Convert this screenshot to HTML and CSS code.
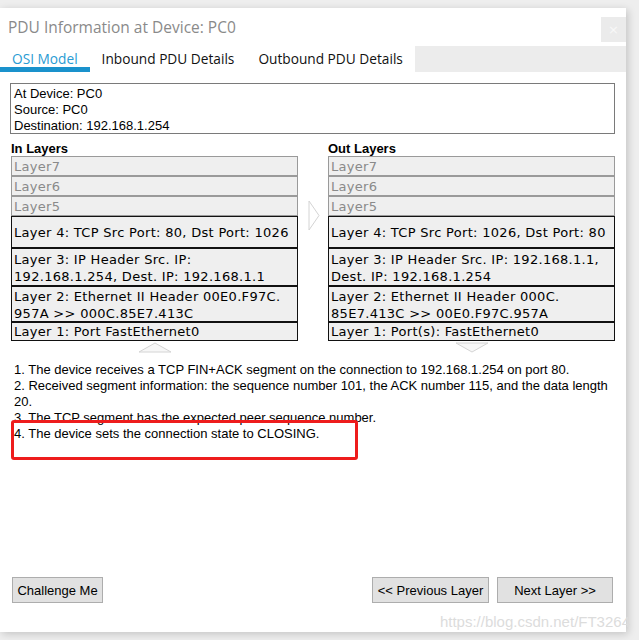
FILE: index.html
```html
<!DOCTYPE html>
<html>
<head>
<meta charset="utf-8">
<link rel="stylesheet" href="styles.css">
</head>
<body>
<div class="window">
  <div class="titlebar">
    <div class="title">PDU Information at Device: PC0</div>
    <div class="close">×</div>
  </div>
  <div class="tabs">
    <div class="tab active">OSI Model</div>
    <div class="tab">Inbound PDU Details</div>
    <div class="tab">Outbound PDU Details</div>
    <div class="tab-fill"></div>
  </div>
  <div class="info">
    <div>At Device: PC0</div>
    <div>Source: PC0</div>
    <div>Destination: 192.168.1.254</div>
  </div>
  <div class="columns">
    <div class="col">
      <div class="col-head">In Layers</div>
      <div class="layer off">Layer7</div>
      <div class="layer off">Layer6</div>
      <div class="layer off">Layer5</div>
      <div class="layer on l4">Layer 4: TCP Src Port: 80, Dst Port: 1026</div>
      <div class="layer on l3">Layer 3: IP Header Src. IP:<br>192.168.1.254, Dest. IP: 192.168.1.1</div>
      <div class="layer on l2">Layer 2: Ethernet II Header 00E0.F97C.<br>957A &gt;&gt; 000C.85E7.413C</div>
      <div class="layer on l1">Layer 1: Port FastEthernet0</div>
      <div class="under">
        <svg width="34" height="11" viewBox="0 0 34 11"><polygon points="1,10 17,1 33,10" fill="#f7f7f7" stroke="#d4d4d4" stroke-width="1"/></svg>
      </div>
    </div>
    <div class="mid">
      <svg width="12" height="31" viewBox="0 0 12 31"><polygon points="1,1 11,15.5 1,30" fill="#ffffff" stroke="#d4d4d4" stroke-width="1"/></svg>
    </div>
    <div class="col">
      <div class="col-head">Out Layers</div>
      <div class="layer off">Layer7</div>
      <div class="layer off">Layer6</div>
      <div class="layer off">Layer5</div>
      <div class="layer on l4">Layer 4: TCP Src Port: 1026, Dst Port: 80</div>
      <div class="layer on l3">Layer 3: IP Header Src. IP: 192.168.1.1,<br>Dest. IP: 192.168.1.254</div>
      <div class="layer on l2">Layer 2: Ethernet II Header 000C.<br>85E7.413C &gt;&gt; 00E0.F97C.957A</div>
      <div class="layer on l1">Layer 1: Port(s): FastEthernet0</div>
      <div class="under">
        <svg width="34" height="11" viewBox="0 0 34 11"><polygon points="1,1 17,10 33,1" fill="#f7f7f7" stroke="#d4d4d4" stroke-width="1"/></svg>
      </div>
    </div>
  </div>
  <div class="desc">
    <div>1. The device receives a TCP FIN+ACK segment on the connection to 192.168.1.254 on port 80.</div>
    <div>2. Received segment information: the sequence number 101, the ACK number 115, and the data length 20.</div>
    <div>3. The TCP segment has the expected peer sequence number.</div>
    <div>4. The device sets the connection state to CLOSING.</div>
    <div class="highlight"></div>
  </div>
  <div class="buttons">
    <button class="btn challenge">Challenge Me</button>
    <div class="nav">
      <button class="btn prev">&lt;&lt; Previous Layer</button>
      <button class="btn next">Next Layer &gt;&gt;</button>
    </div>
  </div>
  <div class="watermark">https://blog.csdn.net/FT3264</div>
</div>
</body>
</html>
```

FILE: styles.css
```css
html, body {
  margin: 0;
  padding: 0;
}
body {
  background: #eeeeee;
  width: 639px;
  height: 640px;
  overflow: hidden;
}
.window {
  position: relative;
  margin-top: 8px;
  width: 626px;
  height: 624px;
  background: #ffffff;
  box-shadow: 2px 2px 8px rgba(0,0,0,0.18);
  display: flex;
  flex-direction: column;
}
.titlebar {
  display: flex;
  justify-content: space-between;
  height: 38px;
}
.title {
  font-family: "Open Sans", "Noto Sans", sans-serif;
  font-size: 15.5px;
  color: #8a8a8a;
  padding: 8px 0 0 8px;
}
.close {
  width: 25px;
  height: 25px;
  margin-top: 9px;
  background: #ebebeb;
  color: #f8f8f8;
  font-family: "DejaVu Sans", sans-serif;
  font-size: 13px;
  line-height: 25px;
  text-align: center;
}
.tabs {
  display: flex;
  height: 26px;
  font-family: "Open Sans", "Noto Sans", sans-serif;
  font-size: 13.7px;
}
.tab {
  padding: 4px 12px 0 12px;
  color: #111;
  line-height: 17px;
}
.tab.active {
  color: #2a9bd3;
  border-bottom: 5px solid #1a92cc;
  height: 17px;
}
.tab-fill {
  flex: 1;
  background: #ececec;
}
.info {
  margin: 11px 0 0 10px;
  width: 600px;
  height: 46px;
  border: 1px solid #7a7a7a;
  padding: 2px 0 1px 3px;
  font-family: "Liberation Sans", Arial, sans-serif;
  font-size: 13px;
  line-height: 16px;
  color: #000;
}
.columns {
  display: flex;
  margin: 6px 0 0 11px;
}
.col {
  width: 287px;
  display: flex;
  flex-direction: column;
}
.col-head {
  font-family: "Liberation Sans", Arial, sans-serif;
  font-weight: bold;
  font-size: 13px;
  line-height: 16px;
  padding-top: 1px;
  height: 15px;
  color: #000;
}
.mid {
  width: 30px;
  padding: 60px 0 0 10px;
  box-sizing: border-box;
}
.layer {
  box-sizing: border-box;
  font-family: "DejaVu Sans", Verdana, sans-serif;
  font-size: 13px;
  letter-spacing: 0.3px;
  padding-left: 2px;
  background: #efefef;
  white-space: nowrap;
}
.layer.off {
  height: 20px;
  line-height: 18px;
  padding-top: 1px;
  color: #8a8a8a;
  border: 1px solid #9a9a9a;
}
.layer.on {
  color: #000;
  border: 1px solid #111;
}
.l4 { height: 32px; line-height: 30px; padding-top: 1px; }
.l3 { height: 38px; line-height: 17px; padding-top: 2px; }
.l2 { height: 36px; line-height: 17px; padding-top: 1px; }
.l1 { height: 19px; line-height: 17px; padding-top: 0; }
.under {
  display: flex;
  justify-content: center;
  padding-top: 1px;
  height: 12px;
}
.desc {
  position: relative;
  margin: 8px 0 0 14px;
  width: 598px;
  font-family: "Liberation Sans", Arial, sans-serif;
  font-size: 13px;
  line-height: 16px;
  color: #000;
}
.highlight {
  position: absolute;
  left: -3px;
  top: 58px;
  width: 341px;
  height: 34px;
  border: 3px solid #ee1c1c;
  border-radius: 3px;
}
.buttons {
  margin-top: auto;
  margin-bottom: 29px;
  display: flex;
  justify-content: space-between;
  padding: 0 13px 0 12px;
}
.nav {
  display: flex;
  gap: 8px;
}
.btn {
  height: 26px;
  border: 1px solid #adadad;
  background: #e1e1e1;
  font-family: "Liberation Sans", Arial, sans-serif;
  font-size: 13px;
  color: #000;
  padding: 0;
}
.challenge { width: 91px; }
.prev { width: 117px; }
.next { width: 116px; }
.watermark {
  position: absolute;
  right: -4px;
  bottom: 2px;
  font-family: "Liberation Sans", Arial, sans-serif;
  font-size: 15px;
  color: #dcdcdc;
}
```
